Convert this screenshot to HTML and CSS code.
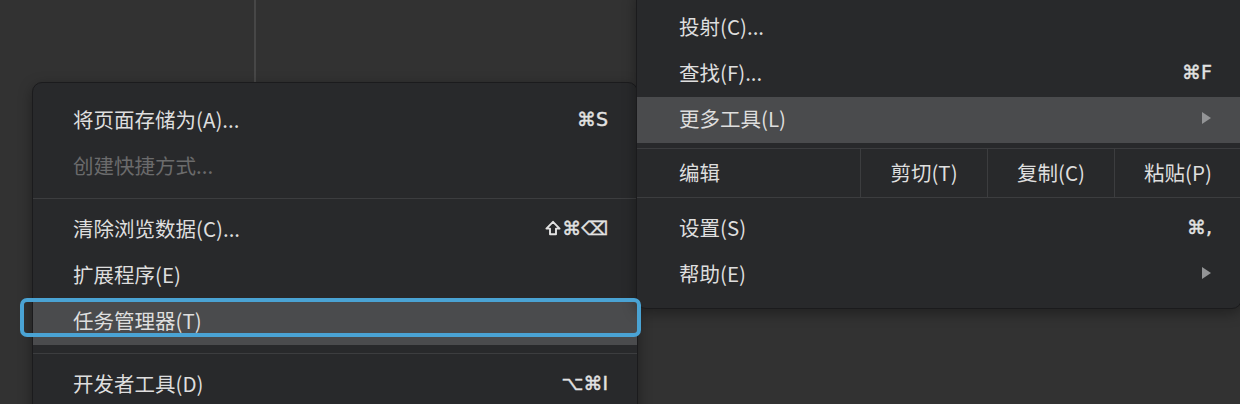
FILE: index.html
```html
<!DOCTYPE html>
<html lang="zh-CN">
<head>
    <meta charset="UTF-8">
    <meta name="viewport" content="width=device-width, initial-scale=1.0">
    <title>更多工具</title>
    <link rel="stylesheet" href="styles.css">
</head>
<body>
    <div class="sidebar"></div>

    <div class="menu submenu">
        <div class="item"><span>将页面存储为(A)...</span><span class="key">⌘S</span></div>
        <div class="item disabled"><span>创建快捷方式...</span></div>
        <div class="sep"></div>
        <div class="item">
            <span>清除浏览数据(C)...</span>
            <span class="key"><svg class="shift" width="16" height="16" viewBox="0 0 16 16"><path d="M8 1.8 L14.6 8.6 H11 V14.2 H5 V8.6 H1.4 Z" fill="none" stroke="#e2e2e2" stroke-width="1.9" stroke-linejoin="round"/></svg>⌘⌫</span>
        </div>
        <div class="item"><span>扩展程序(E)</span></div>
        <div class="item active"><span>任务管理器(T)</span></div>
        <div class="sep"></div>
        <div class="item"><span>开发者工具(D)</span><span class="key">⌥⌘I</span></div>
    </div>

    <div class="menu main-menu">
        <div class="item"><span>投射(C)...</span></div>
        <div class="item"><span>查找(F)...</span><span class="key">⌘F</span></div>
        <div class="item active"><span>更多工具(L)</span><span class="arrow"></span></div>
        <div class="edit-row">
            <span class="edit-label">编辑</span>
            <span class="edit-cell">剪切(T)</span>
            <span class="edit-cell">复制(C)</span>
            <span class="edit-cell">粘贴(P)</span>
        </div>
        <div class="item"><span>设置(S)</span><span class="key">⌘,</span></div>
        <div class="item"><span>帮助(E)</span><span class="arrow"></span></div>
    </div>

    <div class="focus-ring"></div>
</body>
</html>
```

FILE: styles.css
```css
body {
    margin: 0;
    width: 1240px;
    height: 404px;
    overflow: hidden;
    position: relative;
    background-color: #323232;
    font-family: "Noto Sans CJK SC", sans-serif;
    font-size: 20.5px;
    color: #dedede;
}
.sidebar {
    width: 254px;
    height: 100%;
    border-right: 2px solid #474747;
}
.menu {
    position: absolute;
    width: 606px;
    box-sizing: border-box;
    background-color: #28292b;
    border: 1px solid #1b1b1d;
    border-radius: 10px;
    box-shadow: 0 4px 14px rgba(0, 0, 0, 0.35);
}
.submenu {
    left: 32px;
    top: 82px;
    height: 340px;
    padding-top: 15px;
}
.main-menu {
    left: 636px;
    top: -12px;
    padding: 16px 0 10px;
}
.item {
    height: 46px;
    box-sizing: border-box;
    display: flex;
    align-items: center;
    justify-content: space-between;
    padding: 0 29px 4px 40px;
}
.main-menu .item {
    padding-left: 42px;
}
.item.disabled {
    color: #6b6b6c;
}
.item.active {
    background-color: #4a4b4d;
}
.key {
    display: flex;
    align-items: center;
    font-family: "DejaVu Sans", sans-serif;
    font-size: 19px;
    color: #e2e2e2;
    -webkit-text-stroke: 0.4px #e2e2e2;
}
.shift {
    margin-right: 1px;
}
.arrow {
    width: 0;
    height: 0;
    margin-right: 1px;
    border-top: 6px solid transparent;
    border-bottom: 6px solid transparent;
    border-left: 9px solid #939496;
}
.sep {
    height: 1px;
    margin: 8px 0;
    background-color: #3c3d3f;
}
.edit-row {
    display: flex;
    height: 48px;
    margin: 5px 0 8px;
    border-top: 1px solid #3c3d3f;
    border-bottom: 1px solid #3c3d3f;
}
.edit-label,
.edit-cell {
    display: flex;
    align-items: center;
    padding-bottom: 3px;
}
.edit-label {
    flex: 1;
    padding-left: 42px;
}
.edit-cell {
    width: 126px;
    justify-content: center;
    border-left: 1px solid #3c3d3f;
}
.focus-ring {
    position: absolute;
    left: 20px;
    top: 298px;
    width: 621px;
    height: 39px;
    box-sizing: border-box;
    border: 4px solid #4aa3d4;
    border-radius: 7px;
}
```
